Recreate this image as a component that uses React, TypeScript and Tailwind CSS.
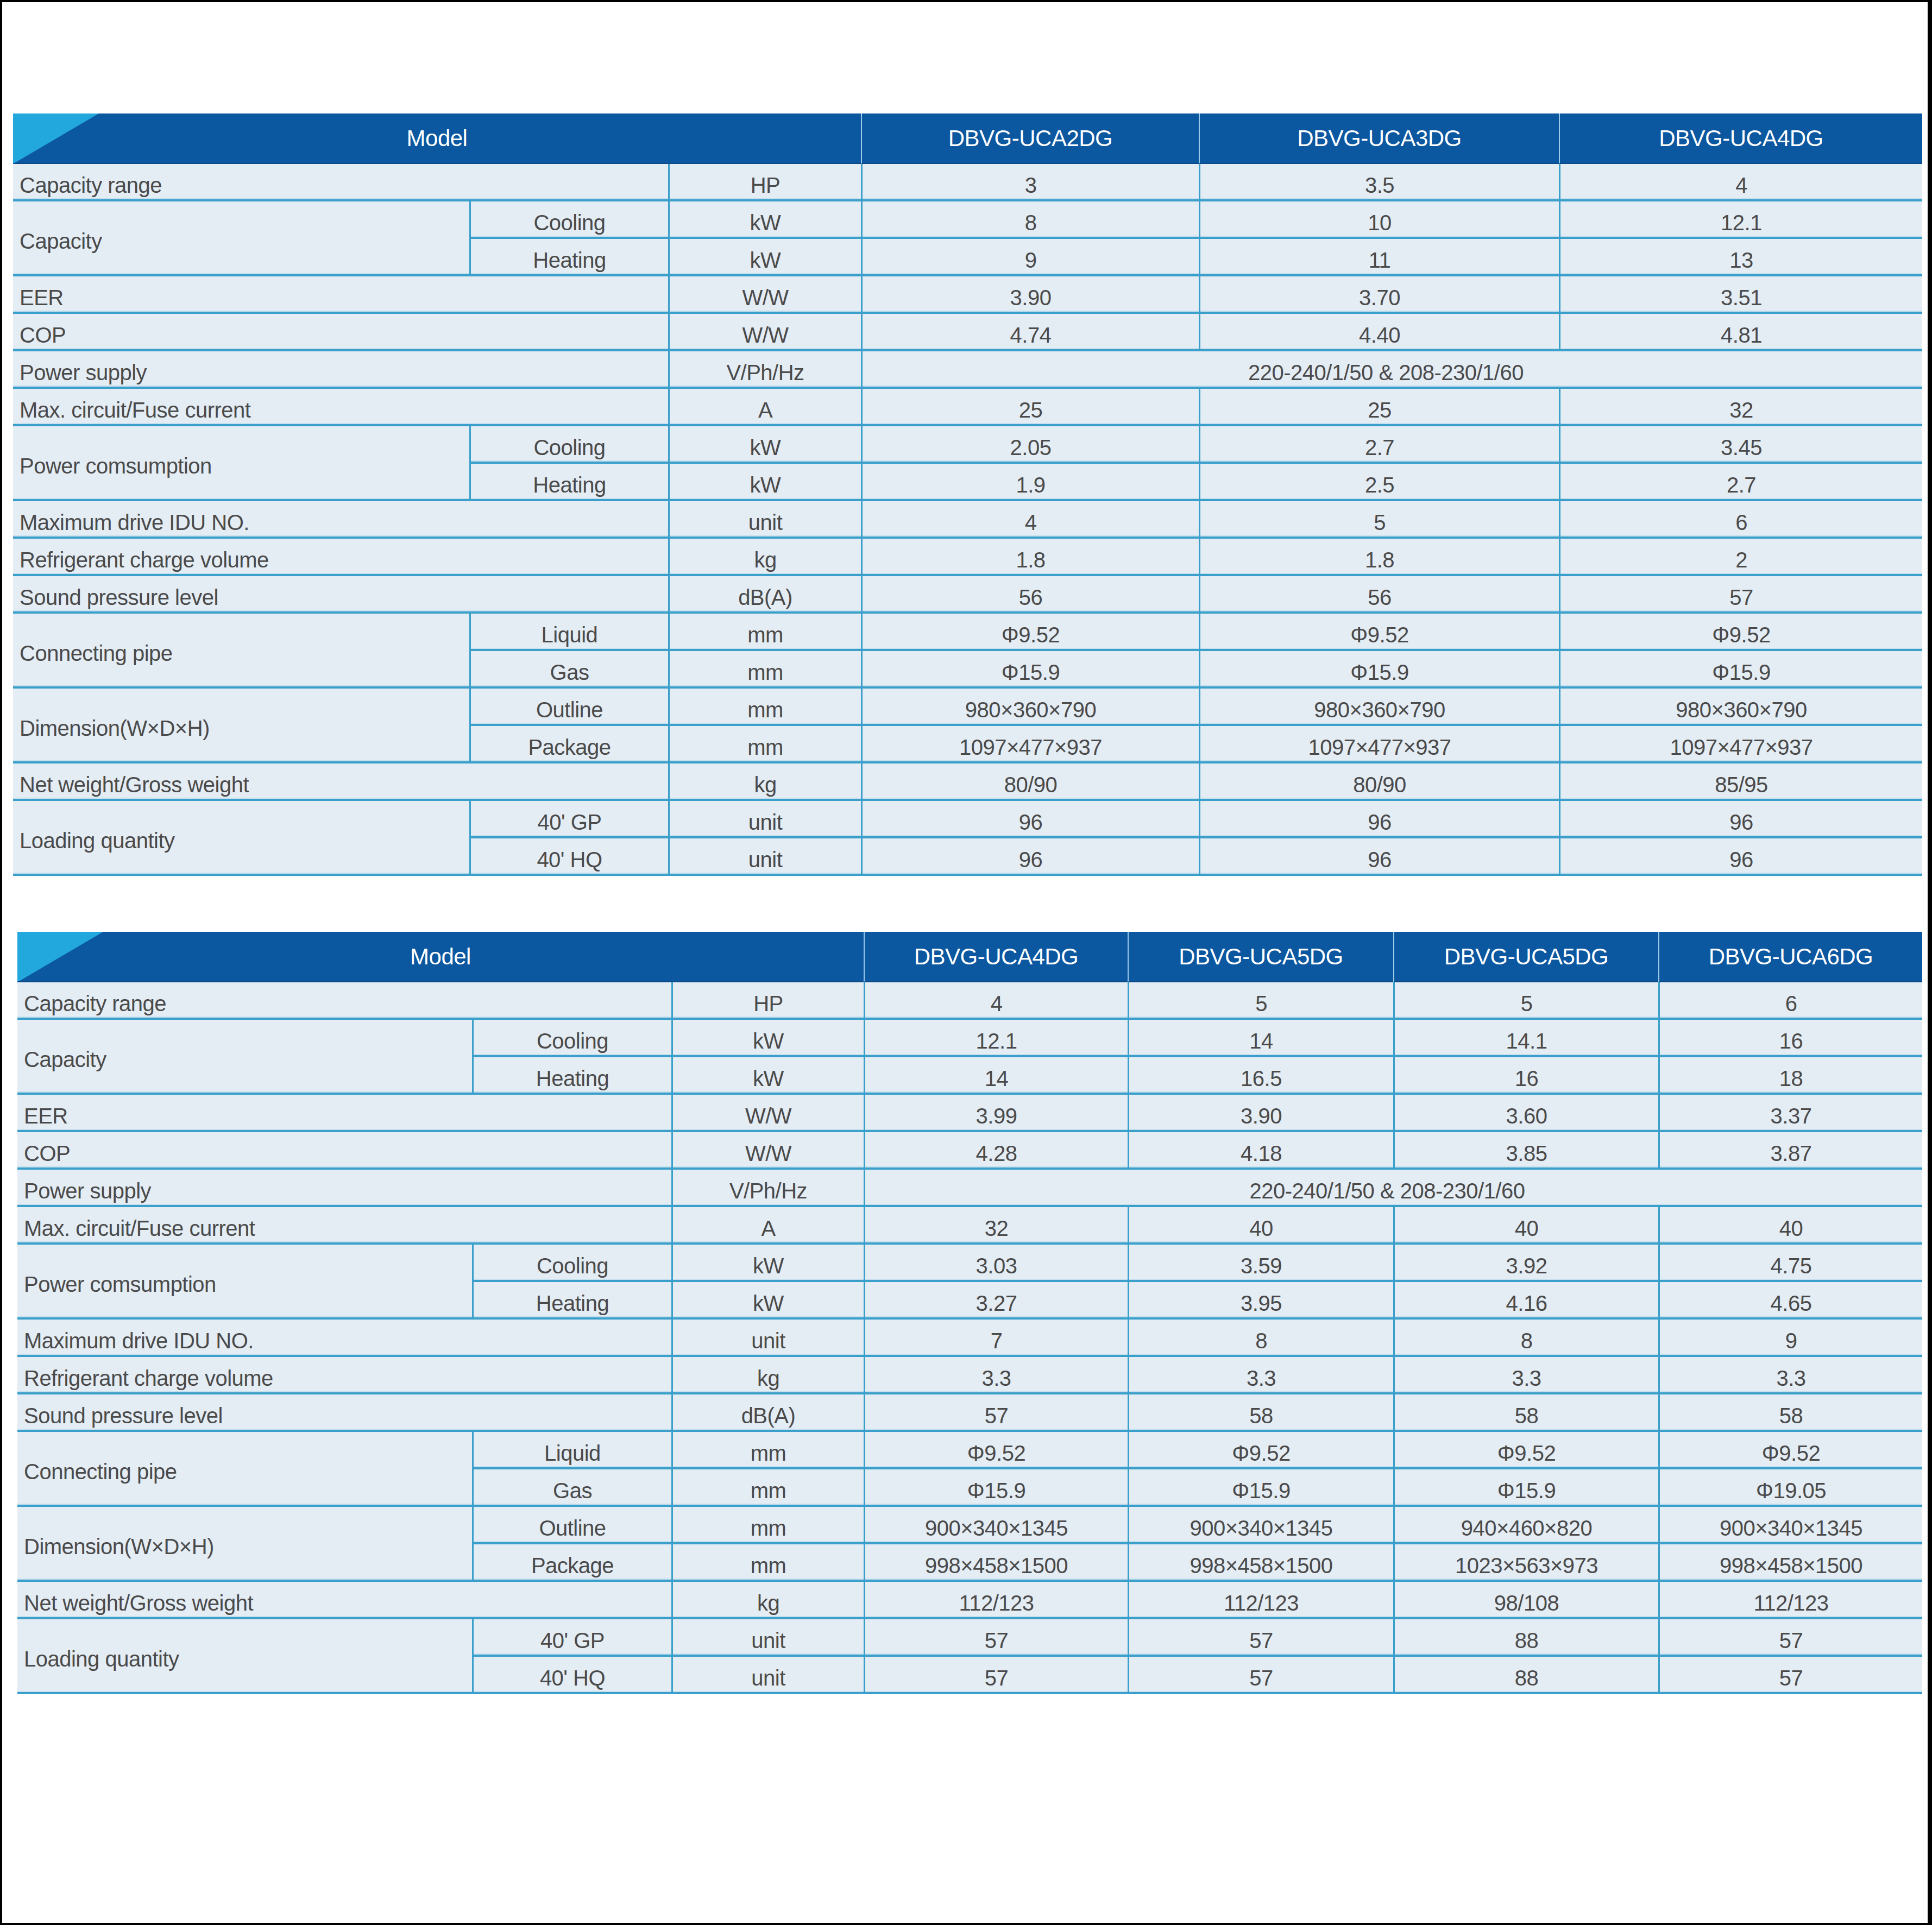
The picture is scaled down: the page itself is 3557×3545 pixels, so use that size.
import React from "react";

type Sub = { name: string; unit: string; values: string[] };
type Row =
  | { kind: "simple"; label: string; unit: string; values: string[] }
  | { kind: "merged"; label: string; unit: string; text: string }
  | { kind: "group"; label: string; subs: Sub[] };

const PS = "220-240/1/50 & 208-230/1/60";

const rows1: Row[] = [
  { kind: "simple", label: "Capacity range", unit: "HP", values: ["3", "3.5", "4"] },
  {
    kind: "group",
    label: "Capacity",
    subs: [
      { name: "Cooling", unit: "kW", values: ["8", "10", "12.1"] },
      { name: "Heating", unit: "kW", values: ["9", "11", "13"] },
    ],
  },
  { kind: "simple", label: "EER", unit: "W/W", values: ["3.90", "3.70", "3.51"] },
  { kind: "simple", label: "COP", unit: "W/W", values: ["4.74", "4.40", "4.81"] },
  { kind: "merged", label: "Power supply", unit: "V/Ph/Hz", text: PS },
  { kind: "simple", label: "Max. circuit/Fuse current", unit: "A", values: ["25", "25", "32"] },
  {
    kind: "group",
    label: "Power comsumption",
    subs: [
      { name: "Cooling", unit: "kW", values: ["2.05", "2.7", "3.45"] },
      { name: "Heating", unit: "kW", values: ["1.9", "2.5", "2.7"] },
    ],
  },
  { kind: "simple", label: "Maximum drive IDU NO.", unit: "unit", values: ["4", "5", "6"] },
  { kind: "simple", label: "Refrigerant charge volume", unit: "kg", values: ["1.8", "1.8", "2"] },
  { kind: "simple", label: "Sound pressure level", unit: "dB(A)", values: ["56", "56", "57"] },
  {
    kind: "group",
    label: "Connecting pipe",
    subs: [
      { name: "Liquid", unit: "mm", values: ["Φ9.52", "Φ9.52", "Φ9.52"] },
      { name: "Gas", unit: "mm", values: ["Φ15.9", "Φ15.9", "Φ15.9"] },
    ],
  },
  {
    kind: "group",
    label: "Dimension(W×D×H)",
    subs: [
      { name: "Outline", unit: "mm", values: ["980×360×790", "980×360×790", "980×360×790"] },
      { name: "Package", unit: "mm", values: ["1097×477×937", "1097×477×937", "1097×477×937"] },
    ],
  },
  { kind: "simple", label: "Net weight/Gross weight", unit: "kg", values: ["80/90", "80/90", "85/95"] },
  {
    kind: "group",
    label: "Loading quantity",
    subs: [
      { name: "40' GP", unit: "unit", values: ["96", "96", "96"] },
      { name: "40' HQ", unit: "unit", values: ["96", "96", "96"] },
    ],
  },
];

const rows2: Row[] = [
  { kind: "simple", label: "Capacity range", unit: "HP", values: ["4", "5", "5", "6"] },
  {
    kind: "group",
    label: "Capacity",
    subs: [
      { name: "Cooling", unit: "kW", values: ["12.1", "14", "14.1", "16"] },
      { name: "Heating", unit: "kW", values: ["14", "16.5", "16", "18"] },
    ],
  },
  { kind: "simple", label: "EER", unit: "W/W", values: ["3.99", "3.90", "3.60", "3.37"] },
  { kind: "simple", label: "COP", unit: "W/W", values: ["4.28", "4.18", "3.85", "3.87"] },
  { kind: "merged", label: "Power supply", unit: "V/Ph/Hz", text: PS },
  { kind: "simple", label: "Max. circuit/Fuse current", unit: "A", values: ["32", "40", "40", "40"] },
  {
    kind: "group",
    label: "Power comsumption",
    subs: [
      { name: "Cooling", unit: "kW", values: ["3.03", "3.59", "3.92", "4.75"] },
      { name: "Heating", unit: "kW", values: ["3.27", "3.95", "4.16", "4.65"] },
    ],
  },
  { kind: "simple", label: "Maximum drive IDU NO.", unit: "unit", values: ["7", "8", "8", "9"] },
  { kind: "simple", label: "Refrigerant charge volume", unit: "kg", values: ["3.3", "3.3", "3.3", "3.3"] },
  { kind: "simple", label: "Sound pressure level", unit: "dB(A)", values: ["57", "58", "58", "58"] },
  {
    kind: "group",
    label: "Connecting pipe",
    subs: [
      { name: "Liquid", unit: "mm", values: ["Φ9.52", "Φ9.52", "Φ9.52", "Φ9.52"] },
      { name: "Gas", unit: "mm", values: ["Φ15.9", "Φ15.9", "Φ15.9", "Φ19.05"] },
    ],
  },
  {
    kind: "group",
    label: "Dimension(W×D×H)",
    subs: [
      { name: "Outline", unit: "mm", values: ["900×340×1345", "900×340×1345", "940×460×820", "900×340×1345"] },
      { name: "Package", unit: "mm", values: ["998×458×1500", "998×458×1500", "1023×563×973", "998×458×1500"] },
    ],
  },
  { kind: "simple", label: "Net weight/Gross weight", unit: "kg", values: ["112/123", "112/123", "98/108", "112/123"] },
  {
    kind: "group",
    label: "Loading quantity",
    subs: [
      { name: "40' GP", unit: "unit", values: ["57", "57", "88", "57"] },
      { name: "40' HQ", unit: "unit", values: ["57", "57", "88", "57"] },
    ],
  },
];

const cell =
  "flex items-center pt-[12px] border-b-4 border-[#3a9fca] shadow-[inset_0_-2px_0_#c6e0ee] bg-[#e4ecf4] whitespace-nowrap";
const vline = "border-l-[3px]";

function Table({
  models,
  rows,
  gridClass,
  spanClass,
}: {
  models: string[];
  rows: Row[];
  gridClass: string;
  spanClass: string;
}) {
  const items: React.ReactNode[] = [];
  rows.forEach((r, i) => {
    if (r.kind === "simple") {
      items.push(
        <div key={`l${i}`} className={`${cell} col-span-2 justify-start pl-[12px]`}>
          {r.label}
        </div>
      );
      items.push(
        <div key={`u${i}`} className={`${cell} ${vline} justify-center`}>
          {r.unit}
        </div>
      );
      r.values.forEach((v, j) =>
        items.push(
          <div key={`v${i}-${j}`} className={`${cell} ${vline} justify-center`}>
            {v}
          </div>
        )
      );
    } else if (r.kind === "merged") {
      items.push(
        <div key={`l${i}`} className={`${cell} col-span-2 justify-start pl-[12px]`}>
          {r.label}
        </div>
      );
      items.push(
        <div key={`u${i}`} className={`${cell} ${vline} justify-center`}>
          {r.unit}
        </div>
      );
      items.push(
        <div key={`m${i}`} className={`${cell} ${vline} ${spanClass} justify-center pr-[24px]`}>
          {r.text}
        </div>
      );
    } else {
      items.push(
        <div key={`l${i}`} className={`${cell} row-span-2 justify-start pl-[12px]`}>
          {r.label}
        </div>
      );
      r.subs.forEach((s, k) => {
        items.push(
          <div key={`s${i}-${k}`} className={`${cell} ${vline} justify-center`}>
            {s.name}
          </div>
        );
        items.push(
          <div key={`su${i}-${k}`} className={`${cell} ${vline} justify-center`}>
            {s.unit}
          </div>
        );
        s.values.forEach((v, j) =>
          items.push(
            <div key={`sv${i}-${k}-${j}`} className={`${cell} ${vline} justify-center`}>
              {v}
            </div>
          )
        );
      });
    }
  });

  return (
    <div
      className={`grid ${gridClass} grid-rows-[93px_repeat(19,69px)] text-[40px] tracking-[-0.5px] text-[#4a4a4a] font-['Liberation_Sans',Arial,sans-serif]`}
    >
      <div className="relative col-span-3 flex items-center justify-center bg-[#0b57a0] border-b-2 border-b-[#0a4a88] text-white text-[42px] tracking-[-0.5px]">
        <svg
          className="absolute left-0 top-0"
          width="160"
          height="91"
          viewBox="0 0 160 91"
        >
          <polygon points="0,0 158,0 3,91 0,91" fill="#23a8de" />
        </svg>
        <span className="relative">Model</span>
      </div>
      {models.map((m, i) => (
        <div
          key={`h${i}`}
          className="flex items-center justify-center bg-[#0b57a0] border-b-2 border-b-[#0a4a88] border-l-2 border-l-[#9ccbe9] text-white text-[42px] tracking-[-0.5px]"
        >
          {m}
        </div>
      ))}
      {items}
    </div>
  );
}

export default function App() {
  return (
    <div className="w-[3557px] h-[3545px] bg-white border-black border-l-4 border-t-4 border-r-8 border-b-4 flex flex-col">
      <div className="ml-[20px] mt-[205px] w-[3515px]">
        <Table
          models={["DBVG-UCA2DG", "DBVG-UCA3DG", "DBVG-UCA4DG"]}
          rows={rows1}
          gridClass="grid-cols-[840px_366px_355px_622px_663px_669px]"
          spanClass="col-span-3"
        />
      </div>
      <div className="ml-[28px] mt-[103px] w-[3507px]">
        <Table
          models={["DBVG-UCA4DG", "DBVG-UCA5DG", "DBVG-UCA5DG", "DBVG-UCA6DG"]}
          rows={rows2}
          gridClass="grid-cols-[837px_367px_354px_486px_489px_488px_486px]"
          spanClass="col-span-4"
        />
      </div>
    </div>
  );
}
